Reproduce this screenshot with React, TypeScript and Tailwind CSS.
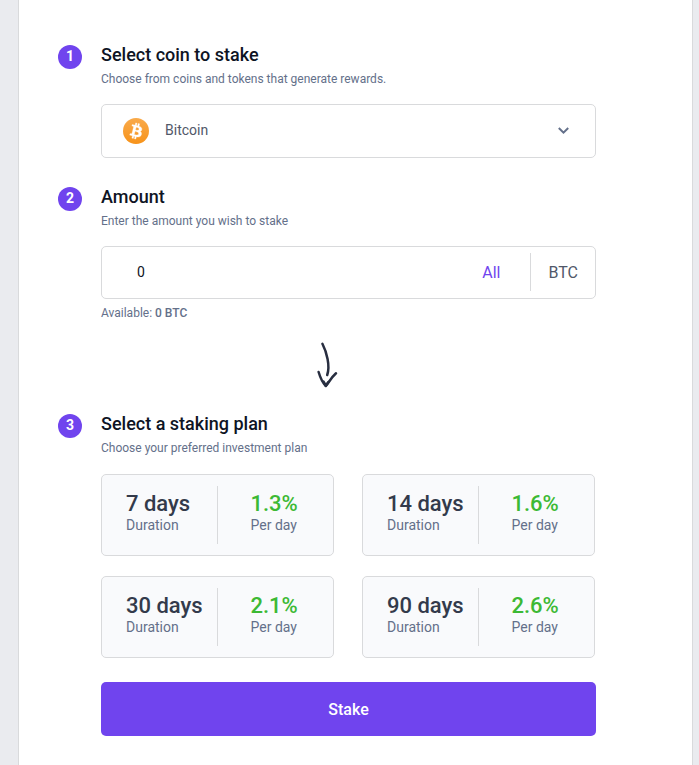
import type { ReactNode } from "react";

type Plan = { days: string; rate: string };

const plans: Plan[] = [
  { days: "7 days", rate: "1.3%" },
  { days: "14 days", rate: "1.6%" },
  { days: "30 days", rate: "2.1%" },
  { days: "90 days", rate: "2.6%" },
];

function BitcoinIcon() {
  return (
    <svg viewBox="0 0 32 32" className="h-[26px] w-[26px]" aria-hidden="true">
      <defs>
        <linearGradient id="coin" x1="0" y1="0" x2="0" y2="1">
          <stop offset="0" stopColor="#f9aa4b" />
          <stop offset="1" stopColor="#f7931a" />
        </linearGradient>
      </defs>
      <circle cx="16" cy="16" r="16" fill="url(#coin)" />
      <path
        fill="#fff"
        stroke="#fff"
        strokeWidth="0.4"
        d="M23.189 14.02c.314-2.096-1.283-3.223-3.465-3.975l.708-2.84-1.728-.43-.69 2.765c-.454-.114-.92-.22-1.385-.326l.695-2.783L15.596 6l-.708 2.839c-.376-.086-.746-.17-1.104-.26l.002-.009-2.384-.595-.46 1.846s1.283.294 1.256.312c.7.175.826.638.805 1.006l-.806 3.235c.048.012.11.03.18.057l-.183-.045-1.13 4.532c-.086.212-.303.531-.793.41.018.025-1.256-.313-1.256-.313l-.858 1.978 2.25.561c.418.105.828.215 1.231.318l-.715 2.872 1.727.43.708-2.84c.472.127.93.245 1.378.357l-.706 2.828 1.728.43.715-2.866c2.948.558 5.164.333 6.097-2.333.752-2.146-.037-3.385-1.588-4.192 1.13-.26 1.98-1.003 2.207-2.538zm-3.95 5.538c-.533 2.147-4.148.986-5.32.695l.95-3.805c1.172.293 4.929.872 4.37 3.11zm.535-5.569c-.487 1.953-3.495.96-4.47.717l.86-3.45c.975.243 4.118.696 3.61 2.733z"
      />
    </svg>
  );
}

function Step({
  number,
  title,
  hint,
  children,
}: {
  number: number;
  title: string;
  hint: string;
  children: ReactNode;
}) {
  return (
    <section className="flex gap-[19px]">
      <span className="mt-0.5 flex h-6 w-6 shrink-0 justify-center rounded-full bg-[#7044ee] text-sm leading-[22px] font-bold text-white">
        {number}
      </span>
      <div className="min-w-0 flex-1">
        <h2 className="text-lg leading-6 font-medium text-[#0e1424]">{title}</h2>
        <p className="mb-[13px] text-xs leading-6 text-[#64708a]">{hint}</p>
        {children}
      </div>
    </section>
  );
}

function PlanCard({ days, rate }: Plan) {
  return (
    <button
      type="button"
      className="flex h-[82px] rounded-[5px] border border-[#d9dadc] bg-[#f9fafc] py-[11px] text-left"
    >
      <span className="flex h-full w-1/2 flex-col border-r border-[#d9dadc] pt-1.5 pl-6 whitespace-nowrap">
        <span className="text-[22px] leading-6 font-medium text-[#333a4b]">{days}</span>
        <span className="text-sm leading-[18px] text-[#64708a]">Duration</span>
      </span>
      <span className="flex h-full w-1/2 flex-col pt-1.5 pl-[33px] whitespace-nowrap">
        <span className="text-[22px] leading-6 font-medium text-[#3cb934]">{rate}</span>
        <span className="text-sm leading-[18px] text-[#64708a]">Per day</span>
      </span>
    </button>
  );
}

export default function App() {
  return (
    <div className="min-h-screen bg-[#eaebef] pr-1.5 pl-[18px] font-[Roboto,sans-serif]">
      <main className="min-h-screen border-x border-[#d9dadc] bg-white pt-[43px] pr-24 pb-7 pl-[39px]">
        <Step number={1} title="Select coin to stake" hint="Choose from coins and tokens that generate rewards.">
          <div className="relative">
            <select
              aria-label="Select coin to stake"
              className="block h-[54px] w-full appearance-none rounded-[5px] border border-[#d9dadc] bg-white pb-0.5 pl-[63px] text-sm text-[#515869]"
            >
              <option>Bitcoin</option>
            </select>
            <span className="pointer-events-none absolute inset-y-0 left-[22px] flex items-center">
              <BitcoinIcon />
            </span>
            <span className="pointer-events-none absolute inset-y-0 right-[26px] flex items-center">
              <svg viewBox="0 0 12 8" className="h-2 w-3" fill="none" stroke="#64708a" strokeWidth="2" aria-hidden="true">
                <path d="M0.8 1 5.500 5.600l4.700-4.600" />
              </svg>
            </span>
          </div>
        </Step>

        <div className="mt-[27px]">
          <Step number={2} title="Amount" hint="Enter the amount you wish to stake">
            <div className="flex h-[53px] rounded-[5px] border border-[#d9dadc] bg-white">
              <input
                type="text"
                aria-label="Amount"
                defaultValue="0"
                className="h-full min-w-0 flex-1 bg-transparent pb-0.5 pl-[35px] text-sm text-[#0e1424] outline-none"
              />
              <button type="button" className="h-full pr-[29px] text-base text-[#7044ee]">
                All
              </button>
              <span className="mt-1.5 flex h-[38px] items-center border-l border-[#d9dadc] pt-0.5 pr-[17px] pl-[18px] text-base text-[#515869]">
                BTC
              </span>
            </div>
            <p className="mt-0.5 text-xs leading-6 text-[#64708a]">
              Available: <span className="font-medium">0 BTC</span>
            </p>
          </Step>
        </div>

        <div className="flex h-[87px] justify-center pt-[17px] pr-px">
          <svg
            viewBox="0 0 22 48"
            className="h-12 w-[22px]"
            fill="none"
            stroke="#282e40"
            strokeWidth="2.5"
            strokeLinecap="round"
            strokeLinejoin="round"
            aria-hidden="true"
          >
            <path d="M6.4 1.8C10.6 10 14.400 23.500 11.200 33" />
            <path d="M2.600 30C4.400 36 6.800 41 9.800 44C12.500 41.500 14.500 36 20 31.200" />
            <path d="M7.400 39.500 9.800 43.500 12.400 40" />
          </svg>
        </div>

        <Step number={3} title="Select a staking plan" hint="Choose your preferred investment plan">
          <div className="mt-3.5 grid grid-cols-2 gap-x-7 gap-y-5 pr-px">
            {plans.map((plan) => (
              <PlanCard key={plan.days} {...plan} />
            ))}
          </div>
          <button
            type="submit"
            className="mt-6 h-[54px] w-full rounded-[5px] bg-[#7044ee] pt-0.5 text-base font-medium text-white"
          >
            Stake
          </button>
        </Step>
      </main>
    </div>
  );
}
